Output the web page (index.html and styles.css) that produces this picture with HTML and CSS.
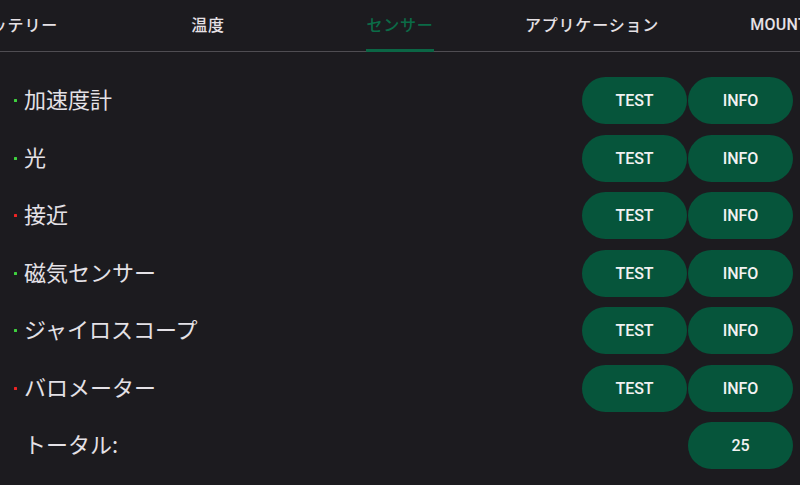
FILE: index.html
```html
<!DOCTYPE html>
<html lang="ja">
<head>
<meta charset="utf-8">
<link rel="stylesheet" href="styles.css">
</head>
<body>
<div class="tabs">
  <div class="tab"><span class="tab-label">バッテリー</span></div>
  <div class="tab"><span class="tab-label">温度</span></div>
  <div class="tab active"><span class="tab-label">センサー</span></div>
  <div class="tab"><span class="tab-label">アプリケーション</span></div>
  <div class="tab"><span class="tab-label latin">MOUNTS</span></div>
</div>
<div class="list">
  <div class="row">
    <div class="label"><span class="dot ok"></span>加速度計</div>
    <div class="actions"><button class="btn">TEST</button><button class="btn">INFO</button></div>
  </div>
  <div class="row">
    <div class="label"><span class="dot ok"></span>光</div>
    <div class="actions"><button class="btn">TEST</button><button class="btn">INFO</button></div>
  </div>
  <div class="row">
    <div class="label"><span class="dot bad"></span>接近</div>
    <div class="actions"><button class="btn">TEST</button><button class="btn">INFO</button></div>
  </div>
  <div class="row">
    <div class="label"><span class="dot ok"></span>磁気センサー</div>
    <div class="actions"><button class="btn">TEST</button><button class="btn">INFO</button></div>
  </div>
  <div class="row">
    <div class="label"><span class="dot ok"></span>ジャイロスコープ</div>
    <div class="actions"><button class="btn">TEST</button><button class="btn">INFO</button></div>
  </div>
  <div class="row">
    <div class="label"><span class="dot bad"></span>バロメーター</div>
    <div class="actions"><button class="btn">TEST</button><button class="btn">INFO</button></div>
  </div>
  <div class="row">
    <div class="label"><span class="dot none"></span>トータル:</div>
    <div class="actions"><button class="btn">25</button></div>
  </div>
</div>
</body>
</html>
```
FILE: styles.css
```css
* { box-sizing: border-box; }
html, body {
  margin: 0;
  padding: 0;
  background: #1c1b1f;
  width: 800px;
  height: 485px;
  overflow: hidden;
  font-family: Roboto, "Noto Sans CJK JP", sans-serif;
  color: #e6e1e5;
}
.tabs {
  display: flex;
  height: 52px;
  margin-left: -80px;
  width: 880px;
  box-shadow: inset 0 -1px 0 #4f4d52;
}
.tab {
  flex: 0 0 192px;
  display: flex;
  justify-content: center;
  align-items: stretch;
}
.tab-label {
  display: flex;
  align-items: center;
  padding-bottom: 1px;
  font-size: 16px;
  font-weight: 500;
  letter-spacing: 0.8px;
  border-bottom: 3px solid transparent;
  white-space: nowrap;
  color: #e6e1e5;
}
.tab-label.latin { letter-spacing: 0.3px; }
.tab.active .tab-label {
  color: #0b6b47;
  border-bottom-color: #0b6645;
  border-radius: 1px;
}
.list {
  padding: 20px 7px 0 0;
}
.row {
  height: 57.5px;
  display: flex;
  align-items: center;
  justify-content: space-between;
}
.label {
  display: flex;
  align-items: center;
  font-family: "Noto Sans CJK JP", sans-serif;
  font-size: 22px;
  line-height: 30px;
  color: #e4e1e6;
  padding-left: 14px;
  margin-top: -5px;
}
.dot {
  width: 3px;
  height: 3px;
  border-radius: 0.5px;
  margin-right: 7px;
  margin-top: 5px;
}
.dot.ok { background: #3fd23f; }
.dot.bad { background: #ee2424; }
.actions {
  display: flex;
  gap: 1px;
}
.btn {
  width: 105px;
  height: 47px;
  border: none;
  border-radius: 24px;
  background: #06553b;
  color: #f2f2f2;
  font-family: Roboto, sans-serif;
  font-size: 16px;
  font-weight: 500;
  padding: 0;
}
```
